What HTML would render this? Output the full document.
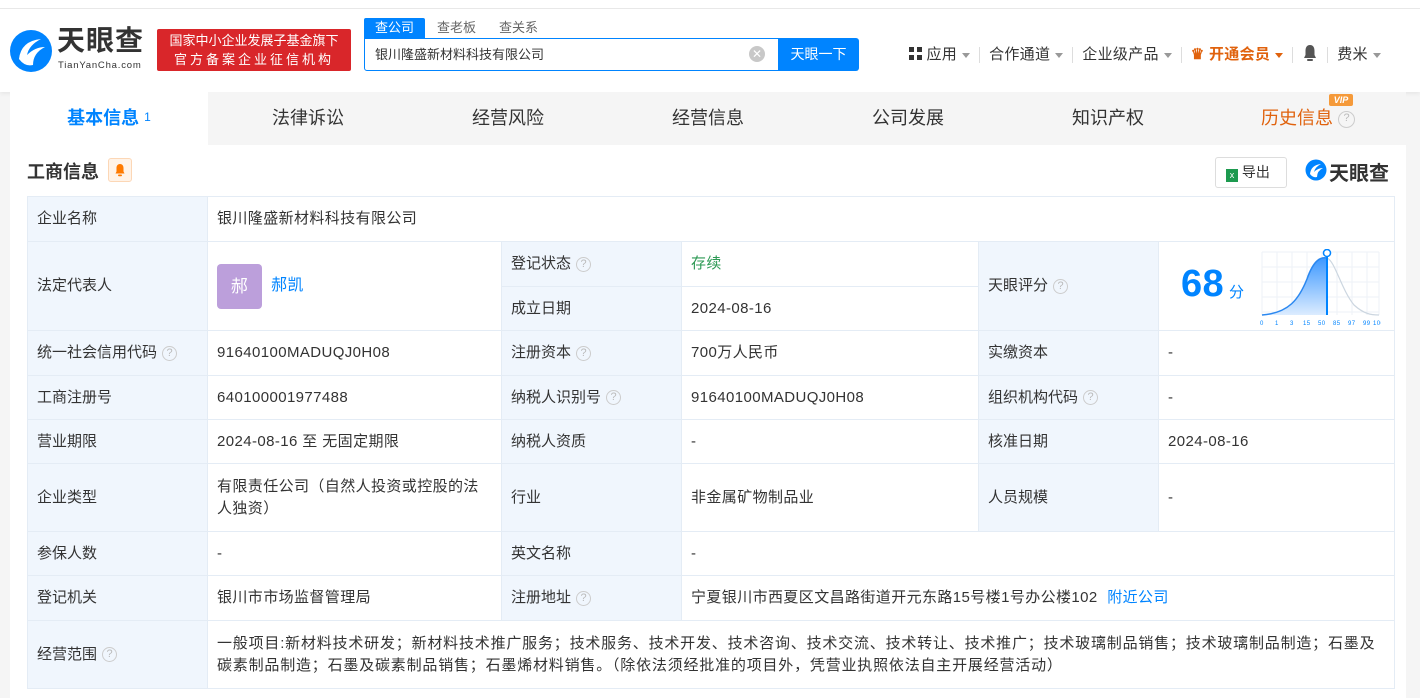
<!DOCTYPE html>
<html><head><meta charset="utf-8"><style>
*{box-sizing:border-box;margin:0;padding:0}
body{width:1420px;height:698px;overflow:hidden;background:#f5f5f5;font-family:"Liberation Sans","Noto Sans CJK SC",sans-serif;color:#333;font-size:15px;position:relative}
.top{position:absolute;left:0;top:0;width:1420px;height:92px;background:#fff;border-top:8px solid #fff;box-shadow:0 2px 4px rgba(0,0,0,.06)}
.top:before{content:"";position:absolute;left:0;top:0;width:1420px;height:1px;background:#e8e8e8}
.abs{position:absolute}
.q{display:inline-block;width:15px;height:15px;border:1px solid #ccc;border-radius:50%;font-size:11px;line-height:13px;text-align:center;color:#bbb;vertical-align:middle;margin-left:5px;letter-spacing:0}
table{position:absolute;left:27px;top:196px;border-collapse:collapse;table-layout:fixed;width:1367px}
td{border:1px solid #e4ecf5;padding:0 9px;font-size:15px;color:#333;line-height:22px;letter-spacing:0.4px}
td.l{background:#f0f6fd;letter-spacing:0}
.tab{position:absolute;top:92px;height:53px;line-height:52px;text-align:center;font-size:18px;color:#333;width:200px}
.arr{display:inline-block;border:4px solid transparent;border-top:5px solid #999;border-bottom:0;vertical-align:middle;margin-left:5px}
.sep{display:inline-block;width:1px;height:16px;background:#ddd;vertical-align:middle;margin:0 9px}
</style></head><body>
<div class="top">
 <svg class="abs" style="left:9px;top:21px" width="44" height="44" viewBox="0 0 44 44"><circle cx="22" cy="22" r="21" fill="#0084ff"/><path d="M10 30 Q12 12 32 10 Q20 16 18 26 Q26 18 36 18 Q24 24 24 36 Q16 38 10 30Z" fill="#fff"/></svg>
 <div class="abs" style="left:57px;top:16px;font-size:28px;line-height:34px;font-weight:bold;color:#333;letter-spacing:1px">天眼查</div>
 <div class="abs" style="left:58px;top:52px;font-size:9.5px;line-height:11px;color:#333;letter-spacing:.8px">TianYanCha.com</div>
 <div class="abs" style="left:157px;top:21px;width:194px;height:42px;background:#d9262a;border-radius:2px;color:#fff;font-size:13px;text-align:center;line-height:19px;padding-top:2px">国家中小企业发展子基金旗下<br><span style="letter-spacing:3px">官方备案企业征信机构</span></div>
 <div class="abs" style="left:364px;top:10px;width:61px;height:20px;background:#0084ff;color:#fff;font-size:13px;text-align:center;line-height:20px;border-radius:2px 2px 0 0">查公司</div>
 <div class="abs" style="left:437px;top:10px;font-size:13px;color:#666;line-height:20px">查老板</div>
 <div class="abs" style="left:499px;top:10px;font-size:13px;color:#666;line-height:20px">查关系</div>
 <div class="abs" style="left:364px;top:30px;width:416px;height:33px;border:1px solid #0084ff;border-radius:0 0 0 3px;font-size:13px;line-height:31px;padding-left:10px;color:#333">银川隆盛新材料科技有限公司</div>
 <div class="abs" style="left:749px;top:38px;width:16px;height:16px;border-radius:50%;background:#c8c8c8;color:#fff;font-size:12px;line-height:16px;text-align:center">✕</div>
 <div class="abs" style="left:778px;top:30px;width:81px;height:33px;background:#0084ff;color:#fff;font-size:14px;line-height:33px;text-align:center;border-radius:0 3px 3px 0">天眼一下</div>
 <div class="abs" style="left:909px;top:36px;font-size:15px;color:#333;line-height:20px;white-space:nowrap;letter-spacing:0.3px">
  <span style="display:inline-block;width:13px;height:13px;vertical-align:-1px;background:linear-gradient(90deg,#333 5px,transparent 5px 8px,#333 8px);-webkit-mask:linear-gradient(#000 5px,transparent 5px 8px,#000 8px)"></span> 应用<i class="arr"></i><span class="sep"></span>合作通道<i class="arr"></i><span class="sep"></span>企业级产品<i class="arr"></i><span class="sep"></span><span style="color:#e0620d;font-weight:bold">♛ 开通会员</span><i class="arr" style="border-top-color:#e0620d"></i><span class="sep"></span><svg width="16" height="18" viewBox="0 0 16 18" style="vertical-align:-3px"><path d="M8 1C4.5 1 3.5 4 3.5 7V11L2 14H14L12.5 11V7C12.5 4 11.5 1 8 1Z" fill="#555"/><rect x="5" y="15" width="6" height="2" rx="1" fill="#555"/></svg><span class="sep"></span>费米<i class="arr"></i>
 </div>
</div>
<div class="abs" style="left:10px;top:92px;width:1396px;height:606px;background:#fff"></div>
<div class="abs" style="left:10px;top:92px;width:1396px;height:53px;background:#f5f5f5"></div>
<div class="tab" style="left:10px;width:198px;background:#fff;color:#0084ff;font-weight:bold">基本信息 <span style="font-size:12px;font-weight:normal;position:relative;top:-3px">1</span></div>
<div class="tab" style="left:208px">法律诉讼</div>
<div class="tab" style="left:408px">经营风险</div>
<div class="tab" style="left:608px">经营信息</div>
<div class="tab" style="left:808px">公司发展</div>
<div class="tab" style="left:1008px">知识产权</div>
<div class="tab" style="left:1208px;color:#e0620d">历史信息<span class="q" style="width:17px;height:17px">?</span></div>
<div class="abs" style="left:1329px;top:94px;width:24px;height:12px;background:#f59a3a;color:#fff;font-size:9px;line-height:12px;text-align:center;font-weight:bold;font-style:italic;border-radius:2px">VIP</div>
<div class="abs" style="left:27px;top:158px;font-size:18px;font-weight:bold;color:#333">工商信息</div>
<div class="abs" style="left:108px;top:158px;width:24px;height:24px;border:1px solid #fcd7b6;background:#fff3e8;border-radius:3px"><svg width="22" height="22" viewBox="0 0 22 22"><path d="M11 5C8.5 5 7.5 7 7.5 9V12.5L6.5 14.5H15.5L14.5 12.5V9C14.5 7 13.5 5 11 5Z" fill="#ff7a00"/><rect x="9" y="15.5" width="4" height="1.8" rx=".9" fill="#ff7a00"/></svg></div>
<div class="abs" style="left:1215px;top:157px;width:72px;height:31px;border:1px solid #ddd;border-radius:3px;font-size:14px;line-height:29px;padding-left:10px"><span style="display:inline-block;width:12px;height:13px;background:#1d9a4f;color:#fff;font-size:9px;line-height:13px;text-align:center;vertical-align:-1px">x</span> 导出</div>
<svg class="abs" style="left:1305px;top:159px" width="22" height="22" viewBox="0 0 44 44"><circle cx="22" cy="22" r="21" fill="#0084ff"/><path d="M10 30 Q12 12 32 10 Q20 16 18 26 Q26 18 36 18 Q24 24 24 36 Q16 38 10 30Z" fill="#fff"/></svg>
<div class="abs" style="left:1329px;top:157px;font-size:20px;font-weight:bold;color:#333">天眼查</div>
<table>
<colgroup><col style="width:180px"><col style="width:294px"><col style="width:180px"><col style="width:297px"><col style="width:180px"><col style="width:236px"></colgroup>
<tr style="height:45px"><td class="l">企业名称</td><td colspan="5">银川隆盛新材料科技有限公司</td></tr>
<tr style="height:45px"><td class="l" rowspan="2">法定代表人</td><td rowspan="2"><span style="display:inline-block;width:45px;height:45px;background:#bc9fdb;border-radius:4px;color:#fff;text-align:center;line-height:45px;font-size:17px;vertical-align:middle">郝</span><span style="color:#0084ff;margin-left:9px;font-size:16px">郝凯</span></td><td class="l">登记状态<span class="q">?</span></td><td style="color:#2e9a55">存续</td><td class="l" rowspan="2">天眼评分<span class="q">?</span></td><td rowspan="2" style="position:relative">
<span style="position:absolute;left:22px;top:20px;font-size:38px;font-weight:bold;color:#0084ff;line-height:44px">68</span><span style="position:absolute;left:70px;top:40px;font-size:15px;color:#0084ff">分</span>
<svg style="position:absolute;left:100px;top:7px" width="122" height="78" viewBox="0 0 122 78"><g stroke="#eef2f7" stroke-width="1"><path d="M3 3H120M3 18H120M3 33H120M3 48H120M3 63H120M3 3V66M18 3V66M33 3V66M48 3V66M63 3V66M78 3V66M93 3V66M108 3V66M120 3V66"/></g><defs><linearGradient id="g" x1="0" y1="0" x2="0" y2="1"><stop offset="0" stop-color="#3d98ff"/><stop offset="1" stop-color="#dcecff"/></linearGradient></defs><path d="M3 66C30 64 40 50 48 30C55 10 62 8 68 9V66Z" fill="url(#g)"/><path d="M3 66C30 64 40 50 48 30C55 10 62 8 68 9" stroke="#2b88f0" stroke-width="1.5" fill="none"/><path d="M68 9C76 12 82 40 95 56C105 65 112 66 120 66" stroke="#ccd6e0" stroke-width="1.2" fill="none"/><path d="M68 6V66" stroke="#0084ff" stroke-width="2"/><circle cx="68" cy="4" r="3.5" fill="#fff" stroke="#0084ff" stroke-width="1.5"/><text y="76" font-size="6" fill="#0084ff" font-family="Liberation Sans"><tspan x="1">0</tspan><tspan x="16">1</tspan><tspan x="31">3</tspan><tspan x="44">15</tspan><tspan x="59">50</tspan><tspan x="74">85</tspan><tspan x="89">97</tspan><tspan x="104">99</tspan><tspan x="114">100</tspan></text></svg></td></tr>
<tr style="height:44px"><td class="l">成立日期</td><td>2024-08-16</td></tr>
<tr style="height:45px"><td class="l">统一社会信用代码<span class="q">?</span></td><td>91640100MADUQJ0H08</td><td class="l">注册资本<span class="q">?</span></td><td>700万人民币</td><td class="l">实缴资本</td><td>-</td></tr>
<tr style="height:44px"><td class="l">工商注册号</td><td>640100001977488</td><td class="l">纳税人识别号<span class="q">?</span></td><td>91640100MADUQJ0H08</td><td class="l">组织机构代码<span class="q">?</span></td><td>-</td></tr>
<tr style="height:44px"><td class="l">营业期限</td><td>2024-08-16 至 无固定期限</td><td class="l">纳税人资质</td><td>-</td><td class="l">核准日期</td><td>2024-08-16</td></tr>
<tr style="height:68px"><td class="l">企业类型</td><td>有限责任公司（自然人投资或控股的法人独资）</td><td class="l">行业</td><td>非金属矿物制品业</td><td class="l">人员规模</td><td>-</td></tr>
<tr style="height:44px"><td class="l">参保人数</td><td>-</td><td class="l">英文名称</td><td colspan="3">-</td></tr>
<tr style="height:45px"><td class="l">登记机关</td><td>银川市市场监督管理局</td><td class="l">注册地址<span class="q">?</span></td><td colspan="3">宁夏银川市西夏区文昌路街道开元东路15号楼1号办公楼102 <span style="color:#0084ff;margin-left:5px">附近公司</span></td></tr>
<tr style="height:68px"><td class="l">经营范围<span class="q">?</span></td><td colspan="5" style="letter-spacing:0.8px">一般项目:新材料技术研发；新材料技术推广服务；技术服务、技术开发、技术咨询、技术交流、技术转让、技术推广；技术玻璃制品销售；技术玻璃制品制造；石墨及碳素制品制造；石墨及碳素制品销售；石墨烯材料销售。（除依法须经批准的项目外，凭营业执照依法自主开展经营活动）</td></tr>
</table>
</body></html>
